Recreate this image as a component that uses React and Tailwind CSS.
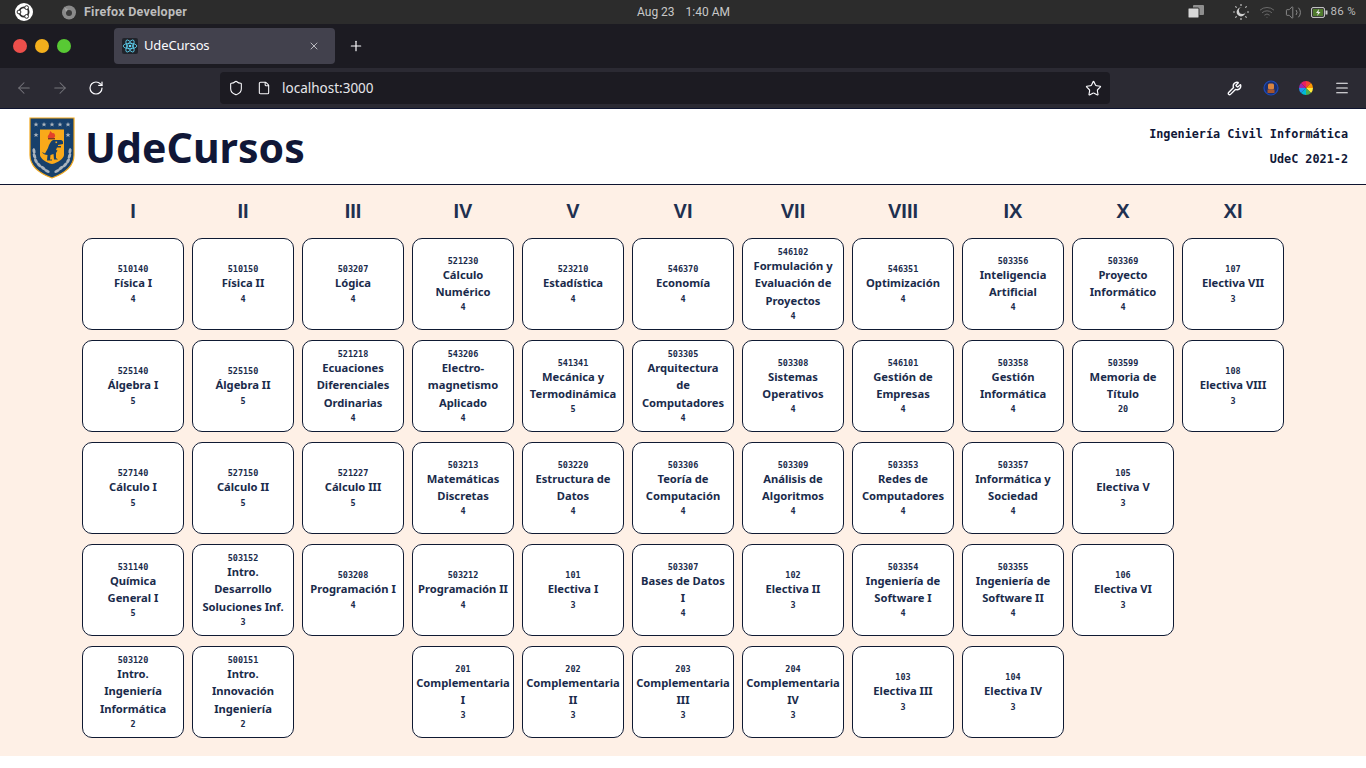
import React from "react";
import { ArrowLeft, ArrowRight, RotateCw, Shield, File, Star, Wrench, Menu, X, Plus, Wifi, Volume2 } from "lucide-react";

const cols = ["I","II","III","IV","V","VI","VII","VIII","IX","X","XI"];
const rows = [
  [["510140","Física I","4"],["510150","Física II","4"],["503207","Lógica","4"],["521230","Cálculo\nNumérico","4"],["523210","Estadística","4"],["546370","Economía","4"],["546102","Formulación y\nEvaluación de\nProyectos","4"],["546351","Optimización","4"],["503356","Inteligencia\nArtificial","4"],["503369","Proyecto\nInformático","4"],["107","Electiva VII","3"]],
  [["525140","Álgebra I","5"],["525150","Álgebra II","5"],["521218","Ecuaciones\nDiferenciales\nOrdinarias","4"],["543206","Electro-\nmagnetismo\nAplicado","4"],["541341","Mecánica y\nTermodinámica","5"],["503305","Arquitectura\nde\nComputadores","4"],["503308","Sistemas\nOperativos","4"],["546101","Gestión de\nEmpresas","4"],["503358","Gestión\nInformática","4"],["503599","Memoria de\nTítulo","20"],["108","Electiva VIII","3"]],
  [["527140","Cálculo I","5"],["527150","Cálculo II","5"],["521227","Cálculo III","5"],["503213","Matemáticas\nDiscretas","4"],["503220","Estructura de\nDatos","4"],["503306","Teoría de\nComputación","4"],["503309","Análisis de\nAlgoritmos","4"],["503353","Redes de\nComputadores","4"],["503357","Informática y\nSociedad","4"],["105","Electiva V","3"],null],
  [["531140","Química\nGeneral I","5"],["503152","Intro.\nDesarrollo\nSoluciones Inf.","3"],["503208","Programación I","4"],["503212","Programación II","4"],["101","Electiva I","3"],["503307","Bases de Datos\nI","4"],["102","Electiva II","3"],["503354","Ingeniería de\nSoftware I","4"],["503355","Ingeniería de\nSoftware II","4"],["106","Electiva VI","3"],null],
  [["503120","Intro.\nIngeniería\nInformática","2"],["500151","Intro.\nInnovación\nIngeniería","2"],null,["201","Complementaria\nI","3"],["202","Complementaria\nII","3"],["203","Complementaria\nIII","3"],["204","Complementaria\nIV","3"],["103","Electiva III","3"],["104","Electiva IV","3"],null,null],
];

function Card({ c }) {
  if (!c) return <div />;
  return (
    <div className="flex flex-col items-center justify-center rounded-[10px] border border-[#0f1a33] bg-white text-center text-[#1a2b4b]">
      <div className="-mb-[1px] pt-[1px] font-['DejaVu_Sans_Mono',monospace] text-[8.5px] font-bold leading-[13px]">{c[0]}</div>
      <div className="-translate-y-[0.6px] whitespace-pre font-['Noto_Sans',sans-serif] text-[11.2px] font-bold leading-[17.4px]">{c[1]}</div>
      <div className="font-['DejaVu_Sans_Mono',monospace] text-[8.5px] font-bold leading-[13px]">{c[2]}</div>
    </div>
  );
}

function StarShape({ x, y }) {
  const pts = "0,-2.6 0.7,-0.8 2.5,-0.8 1.1,0.3 1.6,2.1 0,1 -1.6,2.1 -1.1,0.3 -2.5,-0.8 -0.7,-0.8";
  return <polygon points={pts} transform={`translate(${x} ${y})`} fill="#aab4be" />;
}

const leaves = [[5,34,-10],[5.5,39,-20],[7,44,-30],[10,48,-45],[14,51,-55],[18,54,-65]];

function Crest() {
  return (
    <svg width="46" height="62" viewBox="0 0 46 62" className="mt-[2px] ml-[1px] shrink-0">
      <path d="M1 1H45V38C45 50 34 57 23 61C12 57 1 50 1 38Z" fill="#17406b" stroke="#f2a81d" strokeWidth="1.2" />
      {[7,15,23,31,39].map((x) => <StarShape key={x} x={x} y={7.5} />)}
      <StarShape x={7} y={18} /><StarShape x={39} y={18} />
      <path d="M11 12.5H35V38C35 41 29 46 23 47C17 46 11 41 11 38Z" fill="#f9a91a" />
      <path d="M19 21C18 18 21 18 21 14C23 15 23 17 25 16C26 18 27 19 25 21Z" fill="#e3402a" />
      <rect x="19" y="21" width="7" height="1.4" fill="#7a3a20" />
      <path d="M13 35L16 36.5L19 31C20 27 22 24 24 23H32C33 23 34 24 34 25V27L29 28V29H32V30.5H28L27 33L28.5 33.5L27 36L27 41L29 42.5H25L24.5 37L21.5 38L21 42.5H23V43.5H18L18.5 38C16 38 14 37 13 35Z" fill="#17406b" />
      <rect x="26.5" y="24.5" width="1.6" height="1.6" fill="#f9a91a" />
      {leaves.map(([x, y, r]) => (
        <g key={y} fill="#a9b3bd">
          <ellipse cx={x} cy={y} rx="1.5" ry="2.9" transform={`rotate(${r} ${x} ${y})`} />
          <ellipse cx={46 - x} cy={y} rx="1.5" ry="2.9" transform={`rotate(${-r} ${46 - x} ${y})`} />
        </g>
      ))}
    </svg>
  );
}

function TopBar() {
  return (
    <div className="flex h-[24px] items-center bg-[#2c2c2c] font-['Roboto',sans-serif] text-[#c8c8c8]">
      <div className="flex w-[637px] items-center">
        <svg width="18" height="18" viewBox="0 0 18 18" className="ml-[15px]">
          <circle cx="9" cy="9" r="9" fill="#fff" />
          <circle cx="9" cy="9" r="4.6" fill="none" stroke="#2c2c2c" strokeWidth="1.8" />
          <circle cx="4" cy="9" r="1.9" fill="#fff" stroke="#2c2c2c" />
          <circle cx="11.6" cy="4.6" r="1.9" fill="#fff" stroke="#2c2c2c" />
          <circle cx="11.6" cy="13.4" r="1.9" fill="#fff" stroke="#2c2c2c" />
        </svg>
        <svg width="16" height="16" viewBox="0 0 16 16" className="ml-[28px]">
          <circle cx="8" cy="8.5" r="7" fill="#8a8a8a" />
          <circle cx="8" cy="9" r="3" fill="#3b3b3b" />
          <path d="M3 2C4 4 5 5 7 5L5 8Z" fill="#a8a8a8" />
        </svg>
        <span className="ml-[7px] text-[12.5px] font-bold tracking-[0.25px] text-[#bdbdbd]">Firefox Developer</span>
      </div>
      <div className="flex gap-[11px] text-[12px] text-[#c8c8c8]">
        <span>Aug 23</span><span>1:40 AM</span>
      </div>
      <div className="flex flex-1 items-center justify-end pr-[10px] text-[12px] text-[#bdbdbd]">
        <svg width="16" height="14" viewBox="0 0 16 14"><rect x="5" y="0" width="11" height="10" rx="1" fill="#8f8f8f" /><rect x="0" y="3" width="11" height="10" rx="1" fill="#d8d8d8" stroke="#2c2c2c" /></svg>
        <svg width="16" height="16" viewBox="0 0 16 16" className="ml-[29px]">
          <circle cx="8" cy="8" r="4.4" fill="#d0d0d0" /><circle cx="9.5" cy="6.5" r="3.6" fill="#2c2c2c" />
          <g stroke="#c0c0c0" strokeWidth="1.2"><path d="M8 0V2M8 14V16M0 8H2M14 8H16M2.3 2.3L3.7 3.7M12.3 12.3L13.7 13.7M2.3 13.7L3.7 12.3M12.3 3.7L13.7 2.3" /></g>
        </svg>
        <Wifi size={16} strokeWidth={1.4} className="ml-[10px] text-[#6f6f6f]" />
        <Volume2 size={17} strokeWidth={1.4} className="ml-[10px] text-[#8a8a8a]" />
        <svg width="17" height="11" viewBox="0 0 17 11" className="ml-[9px]"><rect x="0.6" y="0.6" width="12.8" height="9.8" rx="1.4" fill="none" stroke="#d0d0d0" /><rect x="2" y="2" width="10" height="7" fill="#4f7a2d" /><path d="M8 2L5 6H7L6 9L9.5 5H7.5Z" fill="#e8e8e8" /><rect x="14.5" y="3.5" width="2" height="4" fill="#d0d0d0" /></svg>
        <span className="ml-[3px] text-[11.5px] tracking-[0.3px]">86 %</span>
      </div>
    </div>
  );
}

function TabBar() {
  return (
    <div className="flex h-[44px] items-center bg-[#1c1b22] font-['Noto_Sans',sans-serif]">
      <div className="ml-[13px] flex gap-[8px]">
        <span className="h-[14px] w-[14px] rounded-full bg-[#ed4f4b]" />
        <span className="h-[14px] w-[14px] rounded-full bg-[#f3af1c]" />
        <span className="h-[14px] w-[14px] rounded-full bg-[#58c934]" />
      </div>
      <div className="ml-[43px] mb-[1px] flex h-[36px] w-[221px] items-center rounded-[4px] bg-[#42414d] pl-[8px] pr-[15px] text-[13px] tracking-[-0.15px] text-[#fbfbfe]">
        <svg width="16" height="16" viewBox="0 0 16 16" className="shrink-0 rounded-[2px] bg-[#20232a]">
          <g fill="none" stroke="#61dafb" strokeWidth="0.8">
            <ellipse cx="8" cy="8" rx="6.8" ry="2.7" />
            <ellipse cx="8" cy="8" rx="6.8" ry="2.7" transform="rotate(60 8 8)" />
            <ellipse cx="8" cy="8" rx="6.8" ry="2.7" transform="rotate(120 8 8)" />
          </g>
          <circle cx="8" cy="8" r="1.3" fill="#61dafb" />
        </svg>
        <span className="ml-[6px] flex-1">UdeCursos</span>
        <X size={12} strokeWidth={1.6} className="text-[#d8d8dc]" />
      </div>
      <Plus size={16} strokeWidth={1.8} className="ml-[13px] text-[#fbfbfe]" />
    </div>
  );
}

function ToolBar() {
  return (
    <div className="flex h-[40px] items-center bg-[#2b2a33] font-['Noto_Sans',sans-serif] text-[#fbfbfe]">
      <ArrowLeft size={18} strokeWidth={1.4} className="ml-[15px] text-[#77767d]" />
      <ArrowRight size={18} strokeWidth={1.4} className="ml-[18px] text-[#77767d]" />
      <RotateCw size={16} strokeWidth={1.8} className="ml-[19px]" />
      <div className="ml-[116px] flex h-[32px] w-[890px] items-center rounded-[4px] bg-[#1c1b22] pl-[8px] pr-[8px] text-[13.5px]">
        <Shield size={16} strokeWidth={1.6} />
        <File size={14} strokeWidth={1.8} className="ml-[13px]" />
        <span className="ml-[11px] flex-1 text-[#e6e6ea]">localhost:3000</span>
        <Star size={17} strokeWidth={1.6} />
      </div>
      <Wrench size={15} strokeWidth={2.2} className="ml-[117px]" />
      <svg width="16" height="16" viewBox="0 0 16 16" className="ml-[21px]">
        <circle cx="8" cy="8" r="7" fill="#1b2f6e" stroke="#1c49b8" strokeWidth="1.2" />
        <rect x="5" y="3.5" width="6" height="6" rx="1.5" fill="#d9853f" /><rect x="4.5" y="9.5" width="7" height="3.5" fill="#a8552b" />
      </svg>
      <svg width="16" height="16" viewBox="0 0 16 16" className="ml-[19px]">
        <path d="M8 8L8 1A7 7 0 0 1 13 3Z" fill="#f44336" /><path d="M8 8L13 3A7 7 0 0 1 15 8Z" fill="#ff9800" />
        <path d="M8 8L15 8A7 7 0 0 1 13 13Z" fill="#ffeb3b" /><path d="M8 8L13 13A7 7 0 0 1 8 15Z" fill="#4caf50" />
        <path d="M8 8L8 15A7 7 0 0 1 3 13Z" fill="#00bcd4" /><path d="M8 8L3 13A7 7 0 0 1 1 8Z" fill="#2196f3" />
        <path d="M8 8L1 8A7 7 0 0 1 3 3Z" fill="#9c27b0" /><path d="M8 8L3 3A7 7 0 0 1 8 1Z" fill="#e91e63" />
      </svg>
      <Menu size={16} strokeWidth={1.6} className="ml-[20px]" />
    </div>
  );
}

export default function App() {
  return (
    <div className="h-[768px] w-[1366px] overflow-hidden bg-white">
      <TopBar />
      <TabBar />
      <ToolBar />
      <header className="flex h-[77px] items-center justify-between border-y border-[#0e1430] bg-white pl-[28px] pr-[18px]">
        <div className="flex items-center">
          <Crest />
          <h1 className="ml-[10px] mt-[2px] font-['Noto_Sans',sans-serif] text-[41px] font-bold leading-none tracking-[0.05px] text-[#101737]">UdeCursos</h1>
        </div>
        <div className="text-right font-['DejaVu_Sans_Mono',monospace] text-[11.8px] font-bold leading-[25px] text-[#101737]">
          <div>Ingeniería Civil Informática</div>
          <div>UdeC 2021-2</div>
        </div>
      </header>
      <main className="h-[571px] bg-[#fef0e6] pl-[82px] pt-[12px]">
        <div className="grid h-[41px] grid-cols-[repeat(11,102px)] gap-x-[8px]">
          {cols.map((c) => (
            <div key={c} className="pt-[2px] text-center font-['Liberation_Sans',sans-serif] text-[20px] font-bold leading-[24px] text-[#1f3050]">{c}</div>
          ))}
        </div>
        <div className="grid grid-cols-[repeat(11,102px)] auto-rows-[92px] gap-x-[8px] gap-y-[10px]">
          {rows.flat().map((c, i) => <Card key={i} c={c} />)}
        </div>
      </main>
    </div>
  );
}
